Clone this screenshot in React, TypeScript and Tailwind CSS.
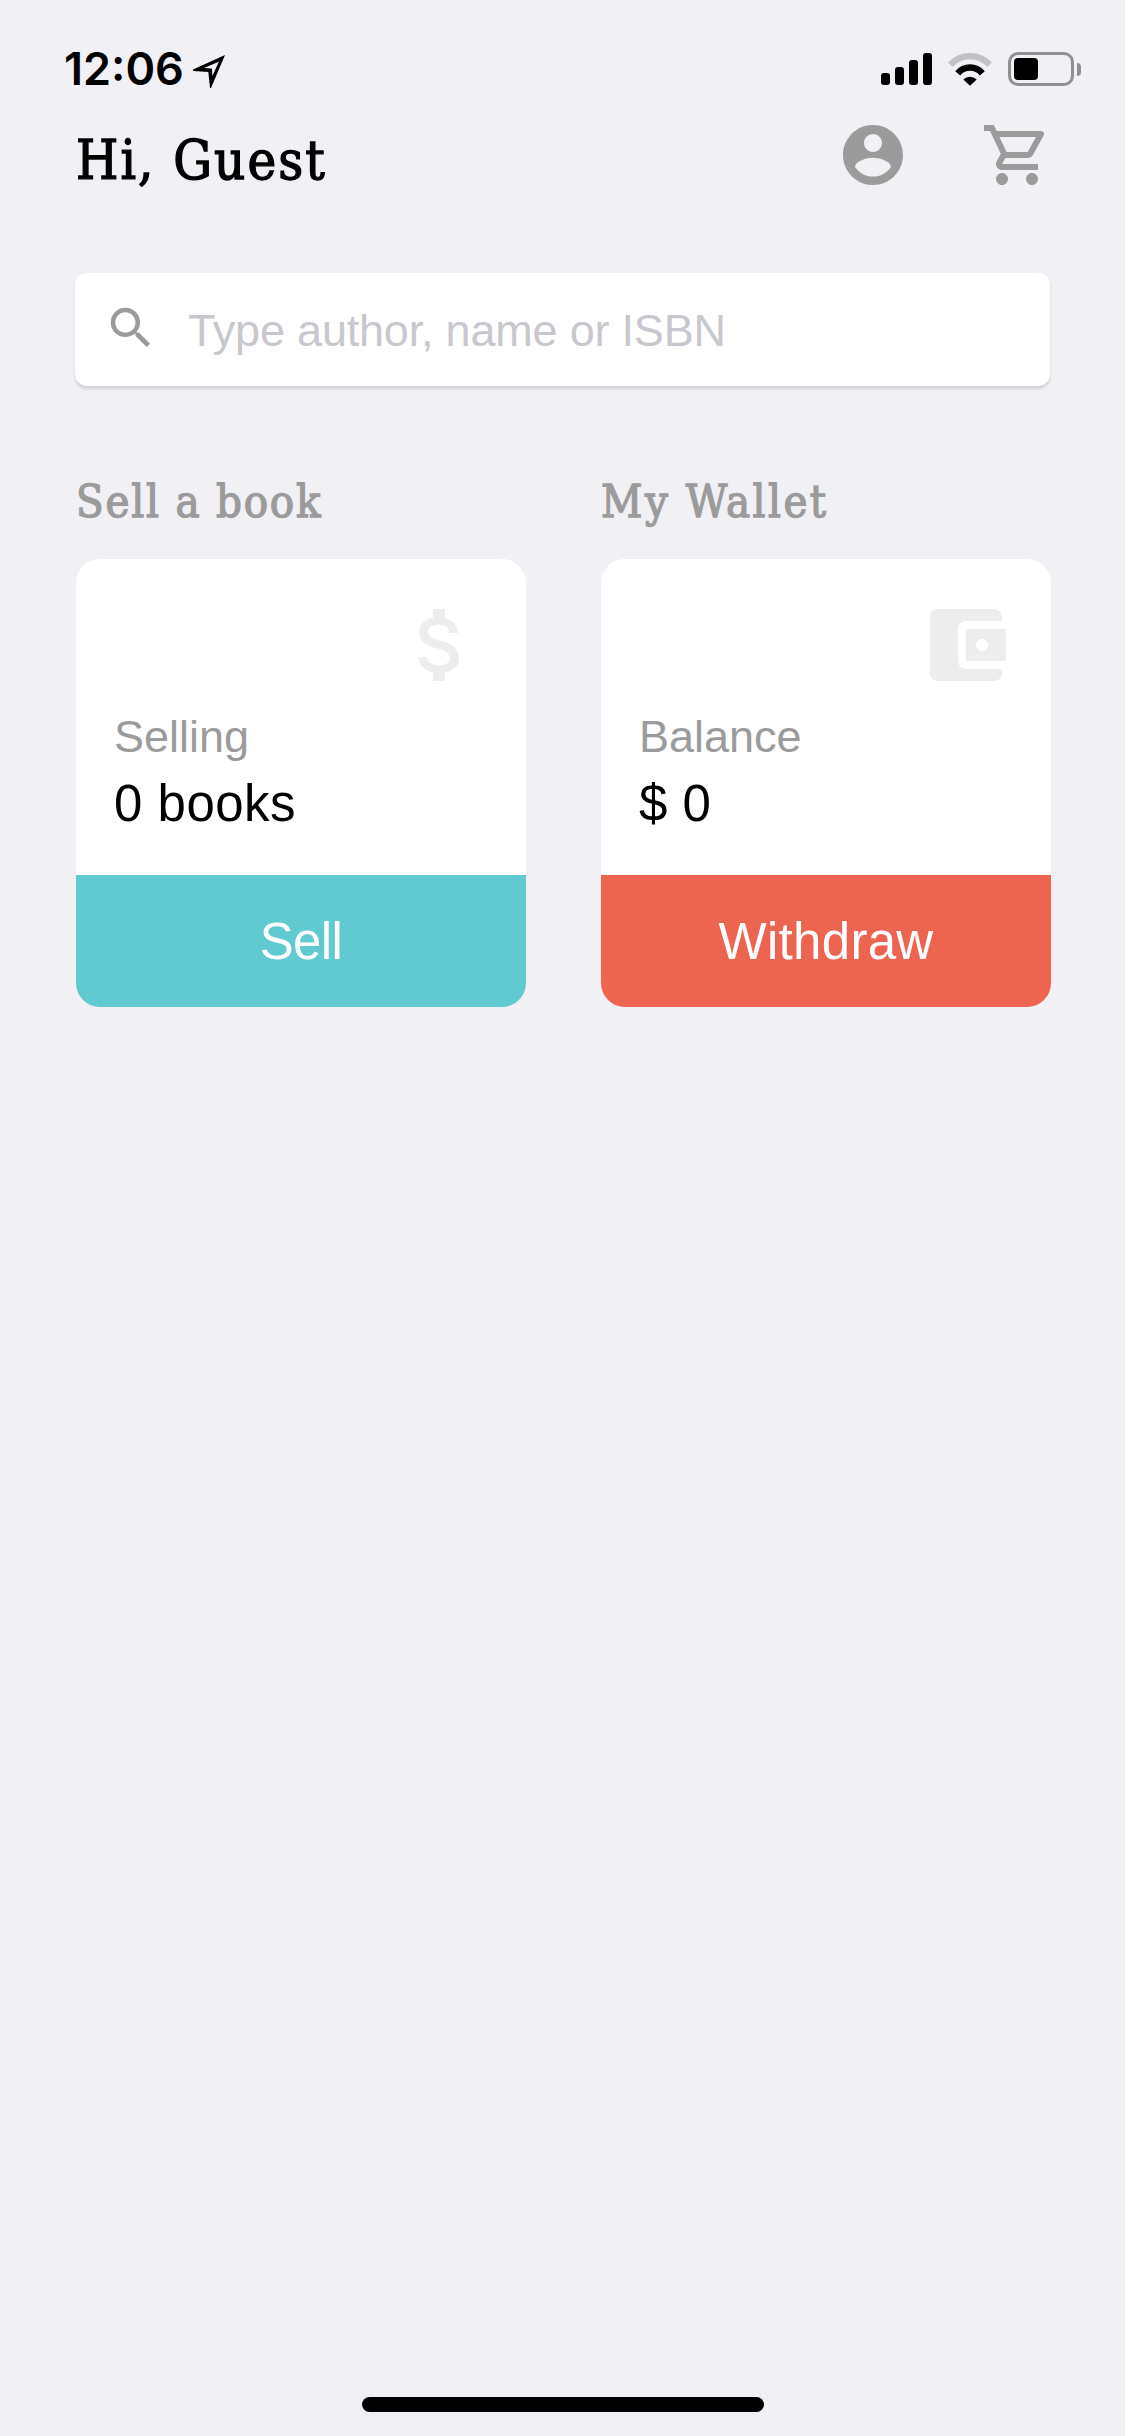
import React from "react";

type IconProps = { d: string; className: string };

const Icon = ({ d, className }: IconProps) => (
  <svg viewBox="0 0 24 24" fill="currentColor" className={className} aria-hidden="true">
    <path d={d} />
  </svg>
);

const ACCOUNT =
  "M12 2C6.48 2 2 6.48 2 12s4.48 10 10 10 10-4.48 10-10S17.52 2 12 2zm0 3c1.66 0 3 1.34 3 3s-1.34 3-3 3-3-1.34-3-3 1.34-3 3-3zm0 14.2c-2.5 0-4.71-1.28-6-3.22.03-1.99 4-3.08 6-3.08 1.99 0 5.97 1.09 6 3.08-1.29 1.94-3.5 3.22-6 3.22z";
const CART =
  "M15.55 13c.75 0 1.41-.41 1.75-1.03l3.58-6.49A.996.996 0 0020.01 4H5.21l-.94-2H1v2h2l3.6 7.59-1.35 2.44C4.52 15.37 5.48 17 7 17h12v-2H7l1.1-2h7.45zM6.16 6h12.15l-2.76 5H8.53L6.16 6zM7 18c-1.1 0-1.99.9-1.99 2S5.9 22 7 22s2-.9 2-2-.9-2-2-2zm10 0c-1.1 0-1.99.9-1.99 2s.89 2 1.99 2 2-.9 2-2-.9-2-2-2z";
const SEARCH =
  "M15.5 14h-.79l-.28-.27A6.471 6.471 0 0016 9.5 6.5 6.5 0 109.5 16c1.61 0 3.09-.59 4.23-1.57l.27.28v.79l5 4.99L20.49 19l-4.99-5zm-6 0C7.01 14 5 11.99 5 9.5S7.01 5 9.5 5 14 7.01 14 9.5 11.99 14 9.5 14z";
const DOLLAR =
  "M11.8 10.9c-2.27-.59-3-1.2-3-2.15 0-1.09 1.01-1.85 2.7-1.85 1.78 0 2.44.85 2.5 2.1h2.21c-.07-1.72-1.12-3.3-3.21-3.81V3h-3v2.16c-1.94.42-3.5 1.68-3.5 3.61 0 2.31 1.91 3.46 4.7 4.13 2.5.6 3 1.48 3 2.41 0 .69-.49 1.79-2.7 1.79-2.06 0-2.87-.92-2.98-2.1h-2.2c.12 2.19 1.76 3.42 3.68 3.83V21h3v-2.15c1.95-.37 3.5-1.5 3.5-3.55 0-2.84-2.43-3.81-4.7-4.4z";
const WALLET =
  "M21 18v1c0 1.100-.9 2-2 2H5c-1.110 0-2-.9-2-2V5c0-1.100.89-2 2-2h14c1.100 0 2 .9 2 2v1h-9c-1.110 0-2 .9-2 2v8c0 1.100.89 2 2 2h9zm-9-2h10V8H12v8zm4-2.500c-.83 0-1.500-.67-1.500-1.500s.67-1.500 1.500-1.500 1.500.67 1.500 1.500-.67 1.500-1.500 1.500z";

const StatusBar = () => (
  <div className="mt-[42px] flex h-[54px] items-center pr-[44px] pl-16">
    <span className="font-['Inter',sans-serif] text-[45px] leading-[54px] font-semibold">
      12:06
    </span>
    <svg viewBox="0 0 33 34" className="mt-1.5 ml-[9px] h-[34px] w-[33px]" aria-hidden="true">
      <path fillRule="evenodd" d="M32 0 0 14.400v1.700l15.300.9L17 33h1zM25.800 6.700 19.400 21 18.900 13.400 11 13z" />
    </svg>
    <div className="ml-auto flex items-center">
      <div className="flex h-8 items-end gap-[5px]">
        <div className="h-3 w-[9px] rounded-[3px] bg-black" />
        <div className="h-[18px] w-[9px] rounded-[3px] bg-black" />
        <div className="h-[25px] w-[9px] rounded-[3px] bg-black" />
        <div className="h-8 w-[9px] rounded-[3px] bg-black" />
      </div>
      <svg viewBox="0 0 46 34" className="ml-[15px] h-[34px] w-[46px]" aria-hidden="true">
        <path d="M3.300 12.700a27.100 27.100 0 0 1 39.400 0" fill="none" stroke="#c2c2c6" strokeWidth="6.300" />
        <path d="M10.700 21.300a16 16 0 0 1 24.600 0" fill="none" stroke="#000" strokeWidth="6.500" />
        <path d="M23 33.800 16.300 27.400a10 10 0 0 1 13.400 0z" />
      </svg>
      <div className="ml-[15px] flex h-[34px] w-[66px] items-center rounded-[10px] border-[3px] border-[#8f8f94] pl-[3px]">
        <div className="h-[22px] w-6 rounded-[4px] bg-black" />
      </div>
      <div className="ml-[3px] h-[13px] w-1 rounded-r-full bg-[#8f8f94]" />
    </div>
  </div>
);

type CardProps = {
  title: string;
  titleClass: string;
  icon: string;
  label: string;
  value: string;
  action: string;
  actionClass: string;
};

const Card = ({ title, titleClass, icon, label, value, action, actionClass }: CardProps) => (
  <section className="w-[450px]">
    <h2
      className={`h-[60px] font-['DejaVu_Serif_Condensed','DejaVu_Serif',serif] text-[45px] leading-[60px] whitespace-nowrap text-[#9b9b9b] [-webkit-text-stroke:1.3px_#9b9b9b] ${titleClass}`}
    >
      {title}
    </h2>
    <div className="mt-[27px] overflow-hidden rounded-[24px] bg-white">
      <div className="flex h-[316px] flex-col pt-[38px] pr-[37px] pl-[38px]">
        <Icon d={icon} className="size-24 self-end text-[#ededed]" />
        <div className="mt-[17px] text-[45px] leading-[54px] text-[#9b9b9b]">{label}</div>
        <div className="mt-2.5 text-[51px] leading-[60px] tracking-[0.5px]">{value}</div>
      </div>
      <button className={`block h-[132px] w-full pt-0.5 text-[51px] leading-[130px] text-white ${actionClass}`}>
        {action}
      </button>
    </div>
  </section>
);

export default function App() {
  return (
    <div className="flex h-[2436px] w-[1125px] flex-col overflow-hidden bg-[#f1f0f5] font-['Liberation_Sans',Arial,sans-serif] text-black">
      <StatusBar />
      <header className="mt-[23px] flex h-[72px] items-center pr-[72px] pl-[76px]">
        <h1 className="mt-3 font-['DejaVu_Serif_Condensed','DejaVu_Serif',serif] text-[54px] leading-[72px] tracking-[2.1px] whitespace-nowrap [-webkit-text-stroke:1.3px_#000]">
          Hi, Guest
        </h1>
        <div className="ml-auto flex gap-[72px] text-[#9b9b9b]">
          <Icon d={ACCOUNT} className="size-[72px]" />
          <Icon d={CART} className="size-[72px]" />
        </div>
      </header>
      <div className="mx-[75px] mt-[82px] flex h-[113px] shrink-0 items-center rounded-[12px] bg-white pl-[29px] shadow-[0_3px_3px_rgba(0,0,0,0.13)]">
        <Icon d={SEARCH} className="mb-[3px] size-[54px] shrink-0 text-[#9b9b9b]" />
        <input
          type="text"
          placeholder="Type author, name or ISBN"
          className="mt-0.5 ml-[30px] h-[60px] w-[800px] text-[45px] tracking-[-0.2px] outline-none placeholder:text-[#c7c7cd]"
        />
      </div>
      <main className="mt-[86px] flex gap-[75px] pl-[76px]">
        <Card
          title="Sell a book"
          titleClass="tracking-[1.8px]"
          icon={DOLLAR}
          label="Selling"
          value="0 books"
          action="Sell"
          actionClass="tracking-[-0.6px] bg-[#61c9d0]"
        />
        <Card
          title="My Wallet"
          titleClass="tracking-[2.5px]"
          icon={WALLET}
          label="Balance"
          value="$ 0"
          action="Withdraw"
          actionClass="tracking-[0.3px] bg-[#ed6450]"
        />
      </main>
      <div className="mx-auto mt-auto mb-6 h-[15px] w-[402px] shrink-0 rounded-full bg-black" />
    </div>
  );
}
